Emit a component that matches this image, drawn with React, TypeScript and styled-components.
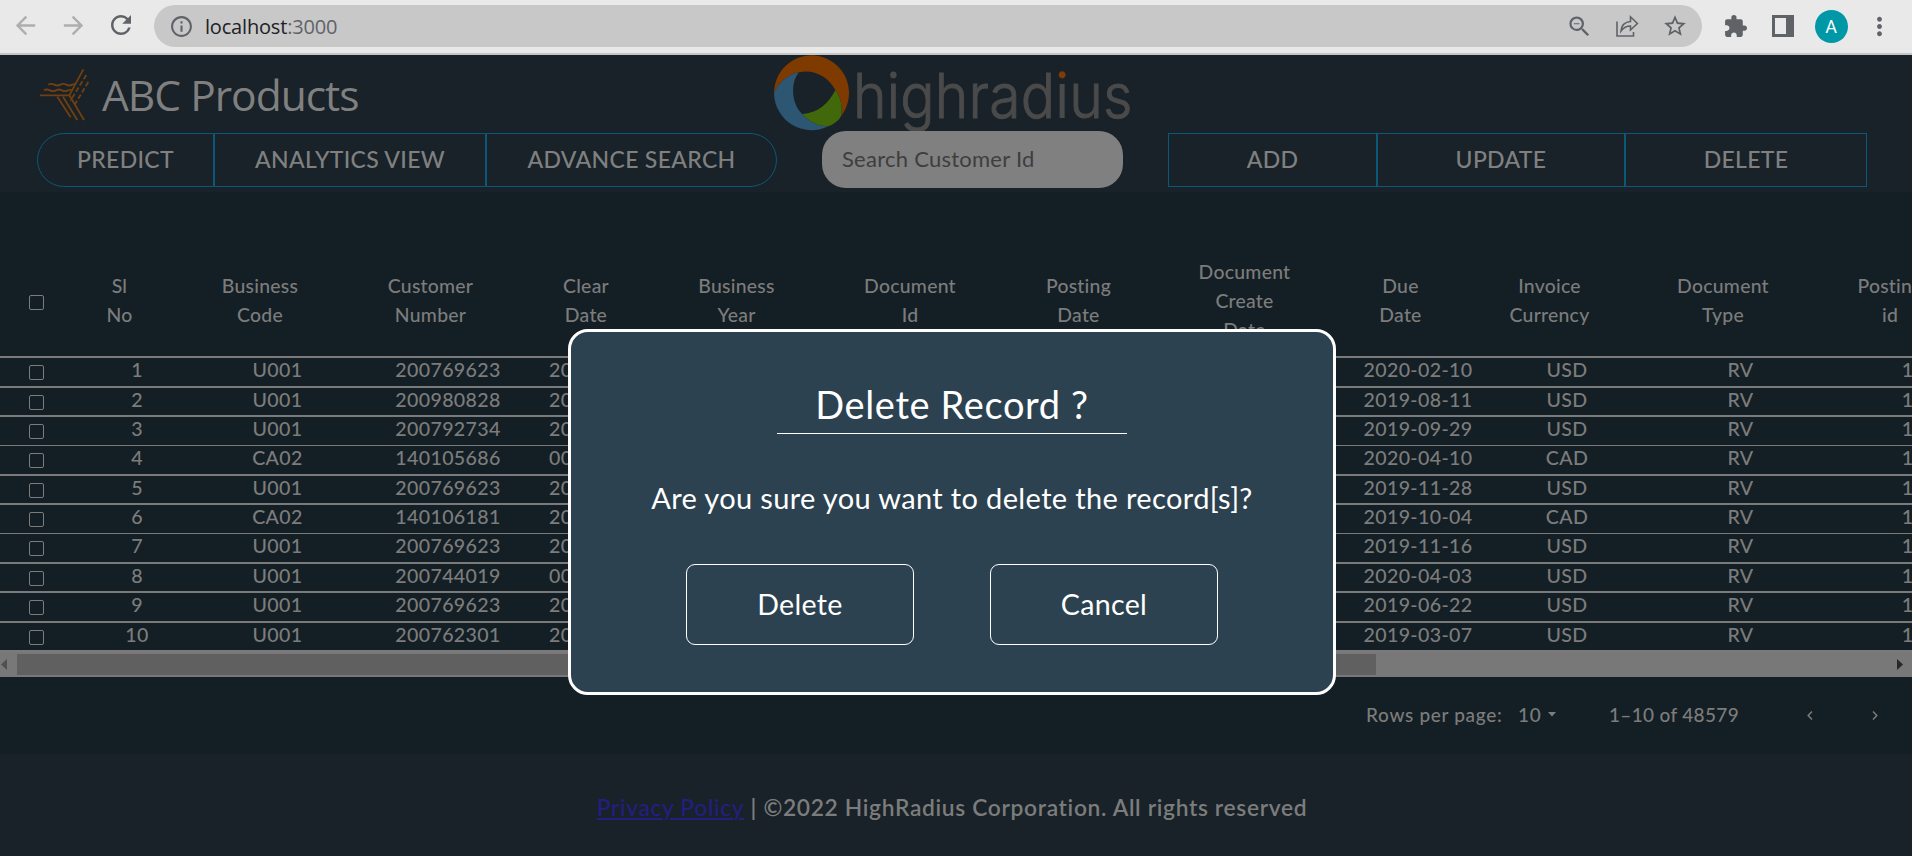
import React from "react";
import styled, { createGlobalStyle } from "styled-components";
import {
  MdArrowBack,
  MdArrowForward,
  MdRefresh,
  MdInfoOutline,
  MdZoomOut,
  MdStarBorder,
  MdExtension,
  MdMoreVert,
} from "react-icons/md";

const GlobalStyle = createGlobalStyle`
  * { box-sizing: border-box; }
  body { margin: 0; background: #fff; overflow: hidden; }
  button, input { font-family: inherit; margin: 0; }
`;

const Page = styled.div`
  position: relative;
  display: flex;
  flex-direction: column;
  width: 1912px;
  height: 856px;
  overflow: hidden;
  background: #141f25;
  font-family: Lato, "Open Sans", sans-serif;
  color: #7c7c7c;
`;

/* Browser toolbar */
const BrowserBar = styled.div`
  flex: none;
  display: flex;
  align-items: center;
  height: 55px;
  padding: 0 0 3px 10px;
  background: #e9e9e9;
  border-bottom: 2px solid #c5c5c6;
  color: #5f6368;
`;

const NavIcon = styled.span<{ $muted?: boolean }>`
  flex: none;
  display: flex;
  justify-content: center;
  width: 48px;
  color: ${(p) => (p.$muted ? "#adaeb0" : "#5f6368")};
`;

const NavGroup = styled.div`
  flex: none;
  display: flex;
  align-items: center;
  width: 144px;
  margin-left: -9px;
`;

const AddressBar = styled.div`
  flex: none;
  display: flex;
  align-items: center;
  width: 1548px;
  height: 42px;
  margin: 2px 0 0 9px;
  padding: 0 3px 0 15px;
  border-radius: 21px;
  background: #c8c8c8;
`;

const Address = styled.span`
  flex: 1;
  margin-left: 11px;
  font: 400 20px "Open Sans", sans-serif;
  letter-spacing: -0.18px;
  color: #202124;
  span { color: #5f6368; }
`;

const ToolGroup = styled.div`
  flex: none;
  display: flex;
  align-items: center;
  margin: 2px 0 0 9px;
`;

const Avatar = styled.span`
  display: flex;
  align-items: center;
  justify-content: center;
  width: 33px;
  height: 33px;
  border-radius: 50%;
  background: #0097a7;
  color: #fff;
  font: 400 18px Roboto, sans-serif;
`;

/* App header */
const Header = styled.header`
  flex: none;
  height: 137px;
  background: #182228;
`;

const BrandRow = styled.div`
  display: flex;
  height: 76px;
`;

const Company = styled.div`
  display: flex;
  width: 744px;
  padding: 5px 0 0 30px;
`;

const CompanyName = styled.h1`
  margin: 4px 0 0 -8px;
  font: 400 42.5px/62px "Open Sans", sans-serif;
  letter-spacing: -1px;
  color: #808080;
`;

const Brand = styled.div`
  display: flex;
  margin-left: 30px;
`;

const BrandName = styled.span`
  margin: 3px 0 0 4px;
  font: 300 62px/76px Inter, sans-serif;
  letter-spacing: 0.2px;
  color: #4a4a4a;
  -webkit-text-stroke: 1px #4a4a4a;
  white-space: nowrap;
  transform: scaleX(0.92);
  transform-origin: left;
`;

const BrandAccent = styled.span`
  background: linear-gradient(#803c02 33%, #4a4a4a 33%);
  background-clip: text;
  -webkit-background-clip: text;
  color: transparent;
  font-weight: 400;
  -webkit-text-stroke: 0;
`;

const ActionRow = styled.div`
  position: relative;
  display: flex;
  align-items: center;
  height: 57px;
  padding-left: 37px;
`;

const ButtonGroup = styled.div<{ $pill?: boolean }>`
  display: flex;
  height: 54px;
  margin-top: 1px;
  ${(p) =>
    p.$pill &&
    `
    button:first-child { border-radius: 27px 0 0 27px; }
    button:last-child { border-radius: 0 27px 27px 0; }
  `}
`;

const ActionButton = styled.button<{ $width: number }>`
  width: ${(p) => p.$width}px;
  padding: 0 0 3px;
  border: 1px solid #0b5878;
  background: transparent;
  color: #808080;
  font-size: 23px;
  font-weight: 500;
  letter-spacing: 0.32px;
`;

const SearchInput = styled.input`
  width: 301px;
  height: 57px;
  margin: 0 45px;
  padding: 0 20px 3px;
  border: 0;
  border-radius: 24px;
  background: #808080;
  font-size: 22px;
  letter-spacing: 0.25px;
  &::placeholder { color: #3e3e3e; opacity: 1; }
`;

/* Table */
const TableArea = styled.main`
  flex: none;
  display: flex;
  flex-direction: column;
  height: 562px;
  padding-top: 56px;
  overflow: hidden;
`;

const HeadRow = styled.div`
  flex: none;
  display: flex;
  align-items: center;
  height: 110px;
  border-bottom: 2px solid #7a7a7a;
  padding-bottom: 4px;
  font-size: 19.4px;
  font-weight: 500;
  line-height: 29px;
  letter-spacing: 0.25px;
`;

const HeadCell = styled.div<{ $width: number }>`
  flex: none;
  width: ${(p) => p.$width}px;
  padding-right: 35px;
  text-align: center;
  white-space: pre-line;
`;

const BodyRow = styled.div<{ $height: number; $thin?: boolean }>`
  flex: none;
  display: flex;
  height: ${(p) => p.$height}px;
  border-bottom: ${(p) => (p.$thin ? 1 : 2)}px solid #7a7a7a;
  font-size: 19.6px;
  font-weight: 500;
  line-height: 24px;
  letter-spacing: 0.36px;
  white-space: nowrap;
`;

const Cell = styled.div<{ $width: number }>`
  flex: none;
  width: ${(p) => p.$width}px;
  text-align: center;
`;

const CheckCell = styled.div<{ $head?: boolean }>`
  flex: none;
  width: 75px;
  padding: ${(p) => (p.$head ? "5px" : "7px")} 0 0 29px;
`;

const CheckBox = styled.span`
  display: block;
  width: 15px;
  height: 15px;
  border: 1.6px solid #7c7c7c;
  border-radius: 2px;
`;

const ScrollTrack = styled.div`
  flex: none;
  display: flex;
  align-items: center;
  height: 25px;
  padding: 0 9px 0 1px;
  background: #787878;
`;

const ScrollThumb = styled.div`
  width: 1359px;
  height: 21px;
  margin: 0 auto 0 10px;
  background: #606060;
`;

const Pagination = styled.div`
  display: flex;
  align-items: center;
  height: 75px;
  padding-left: 1366px;
  font-size: 19px;
  font-weight: 500;
  letter-spacing: 0.68px;
  white-space: nowrap;
`;

const PerPage = styled.span`
  flex: none;
  width: 152px;
`;
const PerPageValue = styled.span`
  flex: none;
  display: flex;
  align-items: center;
  width: 91px;
  gap: 7px;
`;
const Range = styled.span`
  flex: none;
  width: 198px;
  letter-spacing: 0.33px;
`;
const PageArrow = styled.span`
  flex: none;
  display: flex;
  width: 65px;
  padding-top: 2px;
`;

/* Footer */
const Footer = styled.footer`
  flex: 1;
  display: flex;
  justify-content: center;
  padding: 38px 8px 0 0;
  background: #182228;
  font-size: 22.8px;
  font-weight: 600;
  line-height: 30px;
  letter-spacing: 0.66px;
  white-space: pre;
`;

const PolicyLink = styled.a`
  color: #221f80;
  font-weight: 500;
  text-decoration: underline;
  text-decoration-thickness: 2px;
  text-underline-offset: 2px;
  text-decoration-skip-ink: auto;
`;

/* Dialog */
const Dialog = styled.section`
  position: absolute;
  left: 568px;
  top: 329px;
  display: flex;
  flex-direction: column;
  align-items: center;
  width: 768px;
  height: 366px;
  border: 3px solid #fff;
  border-radius: 20px;
  background: #2d4250;
  color: #fff;
`;

const DialogTitle = styled.h2`
  width: 350px;
  height: 62px;
  margin: 40px 0 0;
  border-bottom: 1px solid #fff;
  font-size: 38px;
  font-weight: 400;
  line-height: 64px;
  letter-spacing: 0.62px;
  text-align: center;
`;

const DialogText = styled.p`
  margin: 45px 0 0;
  font-size: 29px;
  font-weight: 400;
  line-height: 38px;
  letter-spacing: 0.36px;
  white-space: nowrap;
`;

const DialogActions = styled.div`
  display: flex;
  gap: 76px;
  margin-top: 47px;
`;

const DialogButton = styled.button`
  width: 228px;
  height: 81px;
  padding: 0 0 2px;
  border: 1px solid #fff;
  border-radius: 9px;
  background: transparent;
  color: #fff;
  font-size: 28.6px;
  font-weight: 400;
  letter-spacing: 0.3px;
`;

const columns: { title: string; width: number }[] = [
  { title: "Sl\nNo", width: 124 },
  { title: "Business\nCode", width: 157 },
  { title: "Customer\nNumber", width: 184 },
  { title: "Clear\nDate", width: 127 },
  { title: "Business\nYear", width: 174 },
  { title: "Document\nId", width: 173 },
  { title: "Posting\nDate", width: 164 },
  { title: "Document\nCreate\nDate", width: 168 },
  { title: "Due\nDate", width: 144 },
  { title: "Invoice\nCurrency", width: 154 },
  { title: "Document\nType", width: 193 },
  { title: "Posting\nid", width: 141 },
];

const records = [
  { code: "U001", customer: "200769623", clear: "2020-02-11", due: "2020-02-10", currency: "USD" },
  { code: "U001", customer: "200980828", clear: "2019-08-08", due: "2019-08-11", currency: "USD" },
  { code: "U001", customer: "200792734", clear: "2019-12-30", due: "2019-09-29", currency: "USD" },
  { code: "CA02", customer: "140105686", clear: "0000-00-00", due: "2020-04-10", currency: "CAD" },
  { code: "U001", customer: "200769623", clear: "2019-11-25", due: "2019-11-28", currency: "USD" },
  { code: "CA02", customer: "140106181", clear: "2019-12-04", due: "2019-10-04", currency: "CAD" },
  { code: "U001", customer: "200769623", clear: "2019-11-12", due: "2019-11-16", currency: "USD" },
  { code: "U001", customer: "200744019", clear: "0000-00-00", due: "2020-04-03", currency: "USD" },
  { code: "U001", customer: "200769623", clear: "2019-06-18", due: "2019-06-22", currency: "USD" },
  { code: "U001", customer: "200762301", clear: "2019-03-06", due: "2019-03-07", currency: "USD" },
];
const rowHeights = [30, 29, 29, 30, 29, 29, 30, 29, 30, 29];

const CompanyLogo = () => (
  <svg width="80" height="64" viewBox="0 0 240 192" fill="none" stroke="#713f0f" strokeWidth="5.5">
    <path d="M30 106H118L160 28M82 110l40 62M99 110l43 70M118 106l44 74" />
    <path d="M55 74q9-5 18 0t18 0 18 0 18 0l8-2M42 91q9-5 18 0t18 0 18 0 18 0l10-2" />
    <path d="M169 45L121 122M175 66L134 134" strokeDasharray="15 7" />
  </svg>
);

const RingLogo = () => (
  <svg width="75" height="76" viewBox="0 0 225 228">
    <path fill="#7f3a00" d="M0 115A112.5 113 0 1 1 200 185C208 160 200 125 184 105C160 60 115 42 75 52C40 58 12 85 0 115Z" />
    <path fill="#2d5672" d="M0 115C12 85 40 58 75 52C50 80 50 145 85 177C105 200 135 215 163 214A113 113 0 0 1 0 115Z" />
    <path fill="#42680c" d="M85 177C130 175 165 145 184 105C200 125 208 160 200 185C195 195 180 208 163 214C135 215 105 200 85 177Z" />
  </svg>
);

const ShareIcon = () => (
  <svg width="24" height="24" viewBox="0 0 24 24" fill="none" stroke="currentColor" strokeWidth="1.6">
    <path d="M2 7.5V22H18.5V18" />
    <path d="M6 17C6.5 11.5 9.5 8 15.5 7.5V2.8L22.4 9.5L15.5 16V12C11 12 8.5 13.5 6 17Z" />
  </svg>
);

const PanelIcon = () => (
  <svg width="22" height="22" viewBox="0 0 22 22">
    <path fill="currentColor" fillRule="evenodd" d="M0 0H22V22H0ZM3 3V19H14V3Z" />
  </svg>
);

export default function App() {
  return (
    <>
      <GlobalStyle />
      <Page>
        <BrowserBar>
          <NavGroup>
            <NavIcon $muted><MdArrowBack size={29} /></NavIcon>
            <NavIcon $muted><MdArrowForward size={29} /></NavIcon>
            <NavIcon><MdRefresh size={30} /></NavIcon>
          </NavGroup>
          <AddressBar>
            <MdInfoOutline size={25} />
            <Address>localhost<span>:3000</span></Address>
            <NavIcon><MdZoomOut size={27} /></NavIcon>
            <NavIcon><ShareIcon /></NavIcon>
            <NavIcon><MdStarBorder size={26} /></NavIcon>
          </AddressBar>
          <ToolGroup>
            <NavIcon><MdExtension size={25} /></NavIcon>
            <NavIcon><PanelIcon /></NavIcon>
            <NavIcon><Avatar>A</Avatar></NavIcon>
            <NavIcon><MdMoreVert size={29} /></NavIcon>
          </ToolGroup>
        </BrowserBar>

        <Header>
          <BrandRow>
            <Company>
              <CompanyLogo />
              <CompanyName>ABC Products</CompanyName>
            </Company>
            <Brand>
              <RingLogo />
              <BrandName>highrad<BrandAccent>i</BrandAccent>us</BrandName>
            </Brand>
          </BrandRow>
          <ActionRow>
            <ButtonGroup $pill>
              <ActionButton $width={177}>PREDICT</ActionButton>
              <ActionButton $width={272}>ANALYTICS VIEW</ActionButton>
              <ActionButton $width={291}>ADVANCE SEARCH</ActionButton>
            </ButtonGroup>
            <SearchInput placeholder="Search Customer Id" />
            <ButtonGroup>
              <ActionButton $width={209}>ADD</ActionButton>
              <ActionButton $width={248}>UPDATE</ActionButton>
              <ActionButton $width={242}>DELETE</ActionButton>
            </ButtonGroup>
          </ActionRow>
        </Header>

        <TableArea>
          <HeadRow>
            <CheckCell $head><CheckBox /></CheckCell>
            {columns.map((c, i) => (
              <HeadCell key={i} $width={c.width}>{c.title}</HeadCell>
            ))}
          </HeadRow>
          {records.map((r, i) => {
            const values = [i + 1, r.code, r.customer, r.clear, "", "", "", "", r.due, r.currency, "RV"];
            return (
              <BodyRow key={i} $height={rowHeights[i]} $thin={i === 2 || i === 5}>
                <CheckCell><CheckBox /></CheckCell>
                {values.map((v, j) => (
                  <Cell key={j} $width={columns[j].width}>{v}</Cell>
                ))}
                <Cell $width={141}>1</Cell>
              </BodyRow>
            );
          })}
          <ScrollTrack>
            <svg width="6" height="11" viewBox="0 0 6 11"><path d="M6 0V11L0 5.5Z" fill="#505050" /></svg>
            <ScrollThumb />
            <svg width="6" height="11" viewBox="0 0 6 11"><path d="M0 0V11L6 5.5Z" fill="#282828" /></svg>
          </ScrollTrack>
          <Pagination>
            <PerPage>Rows per page:</PerPage>
            <PerPageValue>
              10
              <svg width="8" height="5" viewBox="0 0 8 5"><path d="M0 0H8L4 4.5Z" fill="currentColor" /></svg>
            </PerPageValue>
            <Range>1–10 of 48579</Range>
            <PageArrow>
              <svg width="6" height="9" viewBox="0 0 6 9" fill="none" stroke="currentColor" strokeWidth="1.5"><path d="M5 .6L1.2 4.5L5 8.4" /></svg>
            </PageArrow>
            <PageArrow>
              <svg width="6" height="9" viewBox="0 0 6 9" fill="none" stroke="currentColor" strokeWidth="1.5"><path d="M1 .6L4.8 4.5L1 8.4" /></svg>
            </PageArrow>
          </Pagination>
        </TableArea>

        <Footer>
          <PolicyLink href="#">Privacy Policy</PolicyLink>
          <span> | ©2022 HighRadius Corporation. All rights reserved</span>
        </Footer>

        <Dialog role="dialog">
          <DialogTitle>Delete Record ?</DialogTitle>
          <DialogText>Are you sure you want to delete the record[s]?</DialogText>
          <DialogActions>
            <DialogButton>Delete</DialogButton>
            <DialogButton>Cancel</DialogButton>
          </DialogActions>
        </Dialog>
      </Page>
    </>
  );
}
